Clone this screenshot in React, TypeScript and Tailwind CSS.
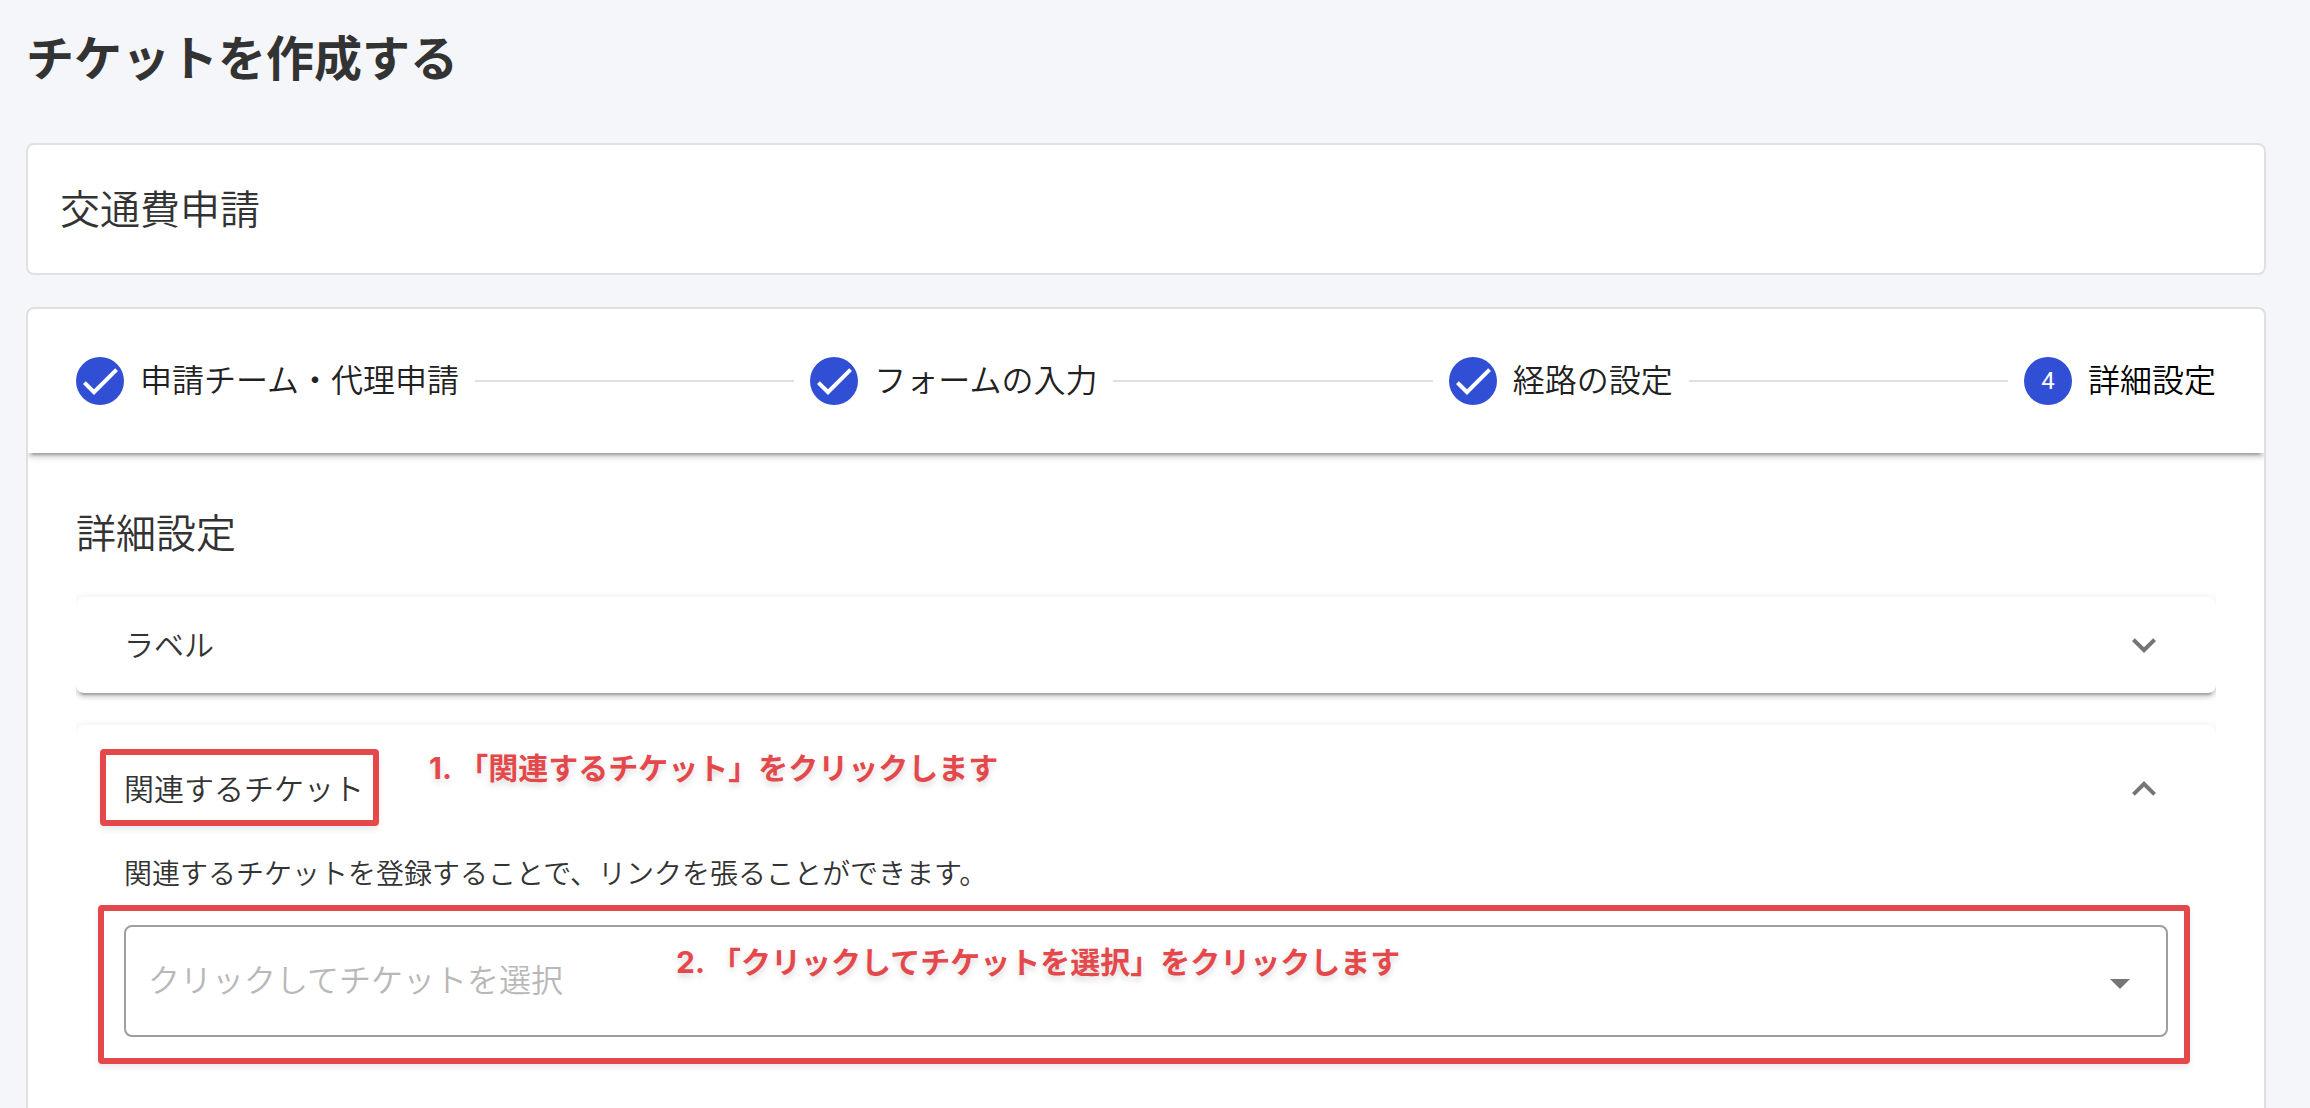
import { Fragment, useState } from "react";

const CHECK = "M21,7L9,19L3.5,13.5L4.91,12.09L9,16.17L19.59,5.59L21,7Z";
const CHEVRON_DOWN = "M7.41,8.58L12,13.17L16.59,8.58L18,10L12,16L6,10L7.41,8.58Z";
const CHEVRON_UP = "M7.41,15.42L12,10.83L16.59,15.42L18,14L12,8L6,14L7.41,15.42Z";
const MENU_DOWN = "M7,10L12,15L17,10H7Z";

const STEPS = ["申請チーム・代理申請", "フォームの入力", "経路の設定", "詳細設定"];
const CURRENT = 3;

function Icon({ path }: { path: string }) {
  return (
    <svg viewBox="0 0 24 24" className="size-12 shrink-0 fill-current" aria-hidden="true">
      <path d={path} />
    </svg>
  );
}

function Stepper() {
  return (
    <ol className="flex items-center gap-4 p-12 shadow-[0_6px_2px_-4px_rgba(0,0,0,0.2),0_4px_4px_0_rgba(0,0,0,0.14),0_2px_10px_0_rgba(0,0,0,0.12)]">
      {STEPS.map((label, i) => (
        <Fragment key={label}>
          {i > 0 && <li aria-hidden="true" className="h-0.5 flex-1 bg-[#e0e0e0]" />}
          <li className="flex h-12 items-center gap-4" aria-current={i === CURRENT ? "step" : undefined}>
            <span className="flex size-12 items-center justify-center rounded-full bg-[#304fd4] font-[Roboto] text-2xl font-normal text-white">
              {i < CURRENT ? <Icon path={CHECK} /> : i + 1}
            </span>
            <span className={i === CURRENT ? "pb-1.5 text-[32px] leading-11 text-black" : "pb-1.5 text-[32px] leading-11 text-[#212121]"}>
              {label}
            </span>
          </li>
        </Fragment>
      ))}
    </ol>
  );
}

const PANEL_SHADOW =
  "shadow-[0_6px_2px_-4px_rgba(0,0,0,0.2),0_4px_4px_0_rgba(0,0,0,0.14),0_2px_10px_0_rgba(0,0,0,0.12)]";

export default function App() {
  const [labelOpen, setLabelOpen] = useState(false);
  const [ticketOpen, setTicketOpen] = useState(true);

  return (
    <main className="flex min-h-screen flex-col bg-[#f5f6fa] pt-5 pr-11 pl-[26px] font-['Noto_Sans_CJK_JP',sans-serif] font-[350] text-[#333333]">
      <h1 className="mb-13 text-[48px] leading-[71px] font-bold">チケットを作成する</h1>

      <section className="mb-8 rounded-lg border-2 border-[#e0e0e0] bg-white px-8 pt-[30px] pb-[34px]">
        <h2 className="text-[40px] leading-16">交通費申請</h2>
      </section>

      <section className="flex flex-1 flex-col overflow-hidden rounded-t-lg border-2 border-b-0 border-[#e0e0e0] bg-white">
        <Stepper />

        <div className="flex flex-1 flex-col px-12 pt-[46px]">
          <h2 className="mb-[34px] text-[40px] leading-16">詳細設定</h2>

          <div className="flex flex-1 flex-col gap-8 overflow-x-clip">
            <div className={`rounded-lg ${PANEL_SHADOW}`}>
              <button
                type="button"
                aria-expanded={labelOpen}
                onClick={() => setLabelOpen(!labelOpen)}
                className="flex h-24 w-full items-center justify-between px-12 text-[30px]"
              >
                <span className="pb-1">ラベル</span>
                <span className="text-[#757575]">
                  <Icon path={labelOpen ? CHEVRON_UP : CHEVRON_DOWN} />
                </span>
              </button>
            </div>

            <div className={`flex-1 rounded-t-lg ${PANEL_SHADOW}`}>
              <div className="relative">
                <button
                  type="button"
                  aria-expanded={ticketOpen}
                  onClick={() => setTicketOpen(!ticketOpen)}
                  className="flex h-32 w-full items-center justify-between px-12 text-[30px]"
                >
                  <span className="pb-1">関連するチケット</span>
                  <span className="text-[#757575]">
                    <Icon path={ticketOpen ? CHEVRON_UP : CHEVRON_DOWN} />
                  </span>
                </button>
                <div className="pointer-events-none absolute top-6 left-6 h-[77px] w-[279px] rounded-sm border-6 border-[#e5484b] shadow-[0_4px_6px_rgba(0,0,0,0.08)]" />
                <p className="pointer-events-none absolute top-6 left-[353px] font-[Inter,'Noto_Sans_CJK_JP',sans-serif] text-[30px] leading-[38px] font-bold whitespace-nowrap text-[#e5484b] text-shadow-[0_4px_6px_rgba(0,0,0,0.15)]">
                  1. 「関連するチケット」をクリックします
                </p>
              </div>

              {ticketOpen && (
                <div className="px-12">
                  <label htmlFor="ticket" className="mb-[34px] block text-[28px] leading-[38px]">
                    関連するチケットを登録することで、リンクを張ることができます。
                  </label>
                  <div className="relative flex h-28 items-center rounded-lg border-2 border-[#9e9e9e] px-[22px]">
                    <input
                      id="ticket"
                      type="text"
                      role="combobox"
                      aria-expanded={false}
                      aria-controls="ticket-list"
                      placeholder="クリックしてチケットを選択"
                      className="h-16 min-w-0 flex-1 pb-1.5 text-[32px] outline-none placeholder:text-[#b8b8b8]"
                    />
                    <button type="button" aria-label="チケットの一覧を開く" className="pt-1 text-[#757575]">
                      <Icon path={MENU_DOWN} />
                    </button>
                    <div className="pointer-events-none absolute -top-[22px] -right-6 -bottom-[29px] -left-7 rounded-sm border-6 border-[#e5484b] shadow-[0_4px_6px_rgba(0,0,0,0.08)]" />
                    <p className="pointer-events-none absolute top-4 left-[550px] font-[Inter,'Noto_Sans_CJK_JP',sans-serif] text-[30px] leading-[38px] font-bold whitespace-nowrap text-[#e5484b] text-shadow-[0_4px_6px_rgba(0,0,0,0.15)]">
                      2. 「クリックしてチケットを選択」をクリックします
                    </p>
                  </div>
                </div>
              )}
            </div>
          </div>
        </div>
      </section>
    </main>
  );
}
